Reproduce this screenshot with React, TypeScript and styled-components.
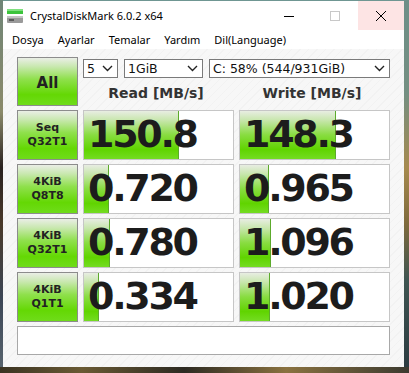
import React from 'react';
import styled, { createGlobalStyle } from 'styled-components';

const GlobalStyle = createGlobalStyle`
  html, body {
    margin: 0;
    padding: 0;
    background: #2c2a24;
  }
  * {
    box-sizing: border-box;
  }
`;

type Result = {
  top: string;
  bottom: string;
  read: string;
  readBar: number;
  write: string;
  writeBar: number;
};

const results: Result[] = [
  { top: 'Seq', bottom: 'Q32T1', read: '150.8', readBar: 95, write: '148.3', writeBar: 96 },
  { top: '4KiB', bottom: 'Q8T8', read: '0.720', readBar: 25, write: '0.965', writeBar: 29 },
  { top: '4KiB', bottom: 'Q32T1', read: '0.780', readBar: 26, write: '1.096', writeBar: 31 },
  { top: '4KiB', bottom: 'Q1T1', read: '0.334', readBar: 15, write: '1.020', writeBar: 30 },
];

const menus = ['Dosya', 'Ayarlar', 'Temalar', 'Yardım', 'Dil(Language)'];

const Desktop = styled.div`
  width: 409px;
  height: 373px;
  display: flex;
  align-items: flex-start;
  padding-left: 3px;
  background:
    linear-gradient(to right, #3a3322 0%, #6a5a34 20%, #2d2a22 45%, #8a7240 70%, #3c3a30 100%) bottom / 100% 6px no-repeat,
    linear-gradient(to bottom, #6e8f88 0%, #748f82 25%, #a68a4e 45%, #7e6a3c 60%, #3f5552 75%, #2a3a40 100%) right / 5px 100% no-repeat,
    linear-gradient(to bottom, #6f8577 0%, #8b8a6a 30%, #2a2220 45%, #4a3a2a 60%, #3c4656 80%, #5a6670 100%) left / 3px 100% no-repeat,
    #2c2a24;
`;

const Window = styled.div`
  width: 401px;
  height: 367px;
  display: flex;
  flex-direction: column;
  background: #ffffff;
  border-top: 1px solid #6f9692;
`;

const TitleBar = styled.div`
  height: 29px;
  display: flex;
  align-items: center;
  font-family: 'Noto Sans', 'Open Sans', sans-serif;
  font-size: 11px;
  color: #000;
`;

const AppIcon = styled.svg`
  margin-left: 4px;
  margin-right: 7px;
  flex-shrink: 0;
`;

const Title = styled.span`
  flex: 1;
  white-space: nowrap;
`;

const Caption = styled.div<{ $close?: boolean }>`
  width: 46px;
  height: 29px;
  display: flex;
  align-items: center;
  justify-content: center;
  background: ${({ $close }) => ($close ? '#fde4e4' : 'transparent')};
`;

const MenuBar = styled.div`
  height: 19px;
  display: flex;
  align-items: center;
  gap: 14px;
  padding-left: 9px;
  font-family: 'Noto Sans', 'Open Sans', sans-serif;
  font-size: 11px;
  color: #000;
`;

const Client = styled.div`
  flex: 1;
  display: grid;
  grid-template-columns: 61px 151px 151px;
  grid-template-rows: 49px repeat(4, 50px) 29px;
  column-gap: 5px;
  row-gap: 4px;
  padding: 8px 14px 0 14px;
  background:
    repeating-linear-gradient(135deg, rgba(0, 0, 0, 0.018) 0px, rgba(0, 0, 0, 0.018) 1px, transparent 1px, transparent 6px),
    #f7f7f7;
`;

const GreenButton = styled.div<{ $big?: boolean }>`
  display: flex;
  flex-direction: column;
  align-items: center;
  justify-content: center;
  border: 1px solid #8c8c8c;
  background: linear-gradient(to bottom, #eaeee6 0%, #c9e8b0 18%, #8fe04c 45%, #64d804 78%, #6fdc1a 100%);
  font-family: 'DejaVu Sans', Verdana, sans-serif;
  font-weight: bold;
  font-size: ${({ $big }) => ($big ? '15px' : '11px')};
  line-height: 14px;
  color: #222;
  padding-top: ${({ $big }) => ($big ? '3px' : '0')};
`;

const TopArea = styled.div`
  grid-column: 2 / 4;
  display: flex;
  flex-direction: column;
  padding-top: 2px;
`;

const ComboRow = styled.div`
  display: flex;
  gap: 6px;
  height: 19px;
`;

const Combo = styled.div<{ $width?: number }>`
  ${({ $width }) => ($width ? `width: ${$width}px;` : 'flex: 1;')}
  display: flex;
  align-items: center;
  justify-content: space-between;
  border: 1px solid #7a7a7a;
  background: #fff;
  padding: 0 4px 0 3px;
  font-family: 'DejaVu Sans', Verdana, sans-serif;
  font-size: 12.5px;
  color: #111;
  white-space: nowrap;
`;

const Headers = styled.div`
  flex: 1;
  display: grid;
  grid-template-columns: 151px 151px;
  column-gap: 5px;
  align-items: center;
`;

const Header = styled.div`
  text-align: center;
  font-family: 'DejaVu Sans', Verdana, sans-serif;
  font-weight: bold;
  font-size: 14px;
  color: #333;
  padding-top: 2px;
  padding-right: 5px;
`;

const Cell = styled.div`
  position: relative;
  display: flex;
  align-items: center;
  border: 1px solid #c6c6c6;
  background: #fff;
  overflow: hidden;
`;

const Bar = styled.div`
  position: absolute;
  left: 0;
  top: 0;
  bottom: 0;
  background: linear-gradient(to bottom, #e8ede2 0%, #c6e6aa 20%, #88dc40 50%, #60d400 80%, #74dc22 100%);
  border-right: 1px solid #5caa2c;
`;

const Value = styled.span`
  position: relative;
  padding-left: 4px;
  margin-top: -3px;
  font-family: 'DejaVu Sans', Verdana, sans-serif;
  font-weight: bold;
  font-size: 38px;
  line-height: 1;
  color: #1c1c1c;
  letter-spacing: -2.3px;
`;

const Comment = styled.div`
  grid-column: 1 / 4;
  border: 1px solid #a8a8a8;
  background: #fff;
`;

const Chevron = () => (
  <svg width="11" height="7" viewBox="0 0 11 7">
    <path d="M1 1 L5.5 5.5 L10 1" fill="none" stroke="#222" strokeWidth="1.4" />
  </svg>
);

export default function App() {
  return (
    <>
      <GlobalStyle />
      <Desktop>
        <Window>
          <TitleBar>
            <AppIcon width="16" height="16" viewBox="0 0 16 16">
              <rect x="0" y="1" width="16" height="5" fill="#3cc43c" />
              <rect x="0" y="1" width="16" height="2" fill="#7fe07f" />
              <rect x="0" y="8" width="16" height="7" rx="1" fill="#9a9a9a" />
              <rect x="0" y="8" width="16" height="2" fill="#c4c4c4" />
              <rect x="2" y="11" width="5" height="2" fill="#5a5a5a" />
            </AppIcon>
            <Title>CrystalDiskMark 6.0.2 x64</Title>
            <Caption>
              <svg width="10" height="10" viewBox="0 0 10 10">
                <line x1="0" y1="5.5" x2="10" y2="5.5" stroke="#000" strokeWidth="1" />
              </svg>
            </Caption>
            <Caption>
              <svg width="10" height="10" viewBox="0 0 10 10">
                <rect x="0.5" y="0.5" width="9" height="9" fill="none" stroke="#c8c8c8" strokeWidth="1" />
              </svg>
            </Caption>
            <Caption $close>
              <svg width="10" height="10" viewBox="0 0 10 10">
                <path d="M0 0 L10 10 M10 0 L0 10" stroke="#000" strokeWidth="1" />
              </svg>
            </Caption>
          </TitleBar>
          <MenuBar>
            {menus.map((m) => (
              <span key={m}>{m}</span>
            ))}
          </MenuBar>
          <Client>
            <GreenButton $big>All</GreenButton>
            <TopArea>
              <ComboRow>
                <Combo $width={35}>
                  5 <Chevron />
                </Combo>
                <Combo $width={79}>
                  1GiB <Chevron />
                </Combo>
                <Combo>
                  C: 58% (544/931GiB) <Chevron />
                </Combo>
              </ComboRow>
              <Headers>
                <Header>Read [MB/s]</Header>
                <Header>Write [MB/s]</Header>
              </Headers>
            </TopArea>
            {results.map((r) => (
              <React.Fragment key={r.top + r.bottom}>
                <GreenButton>
                  <span>{r.top}</span>
                  <span>{r.bottom}</span>
                </GreenButton>
                <Cell>
                  <Bar style={{ width: r.readBar }} />
                  <Value>{r.read}</Value>
                </Cell>
                <Cell>
                  <Bar style={{ width: r.writeBar }} />
                  <Value>{r.write}</Value>
                </Cell>
              </React.Fragment>
            ))}
            <Comment />
          </Client>
        </Window>
      </Desktop>
    </>
  );
}
